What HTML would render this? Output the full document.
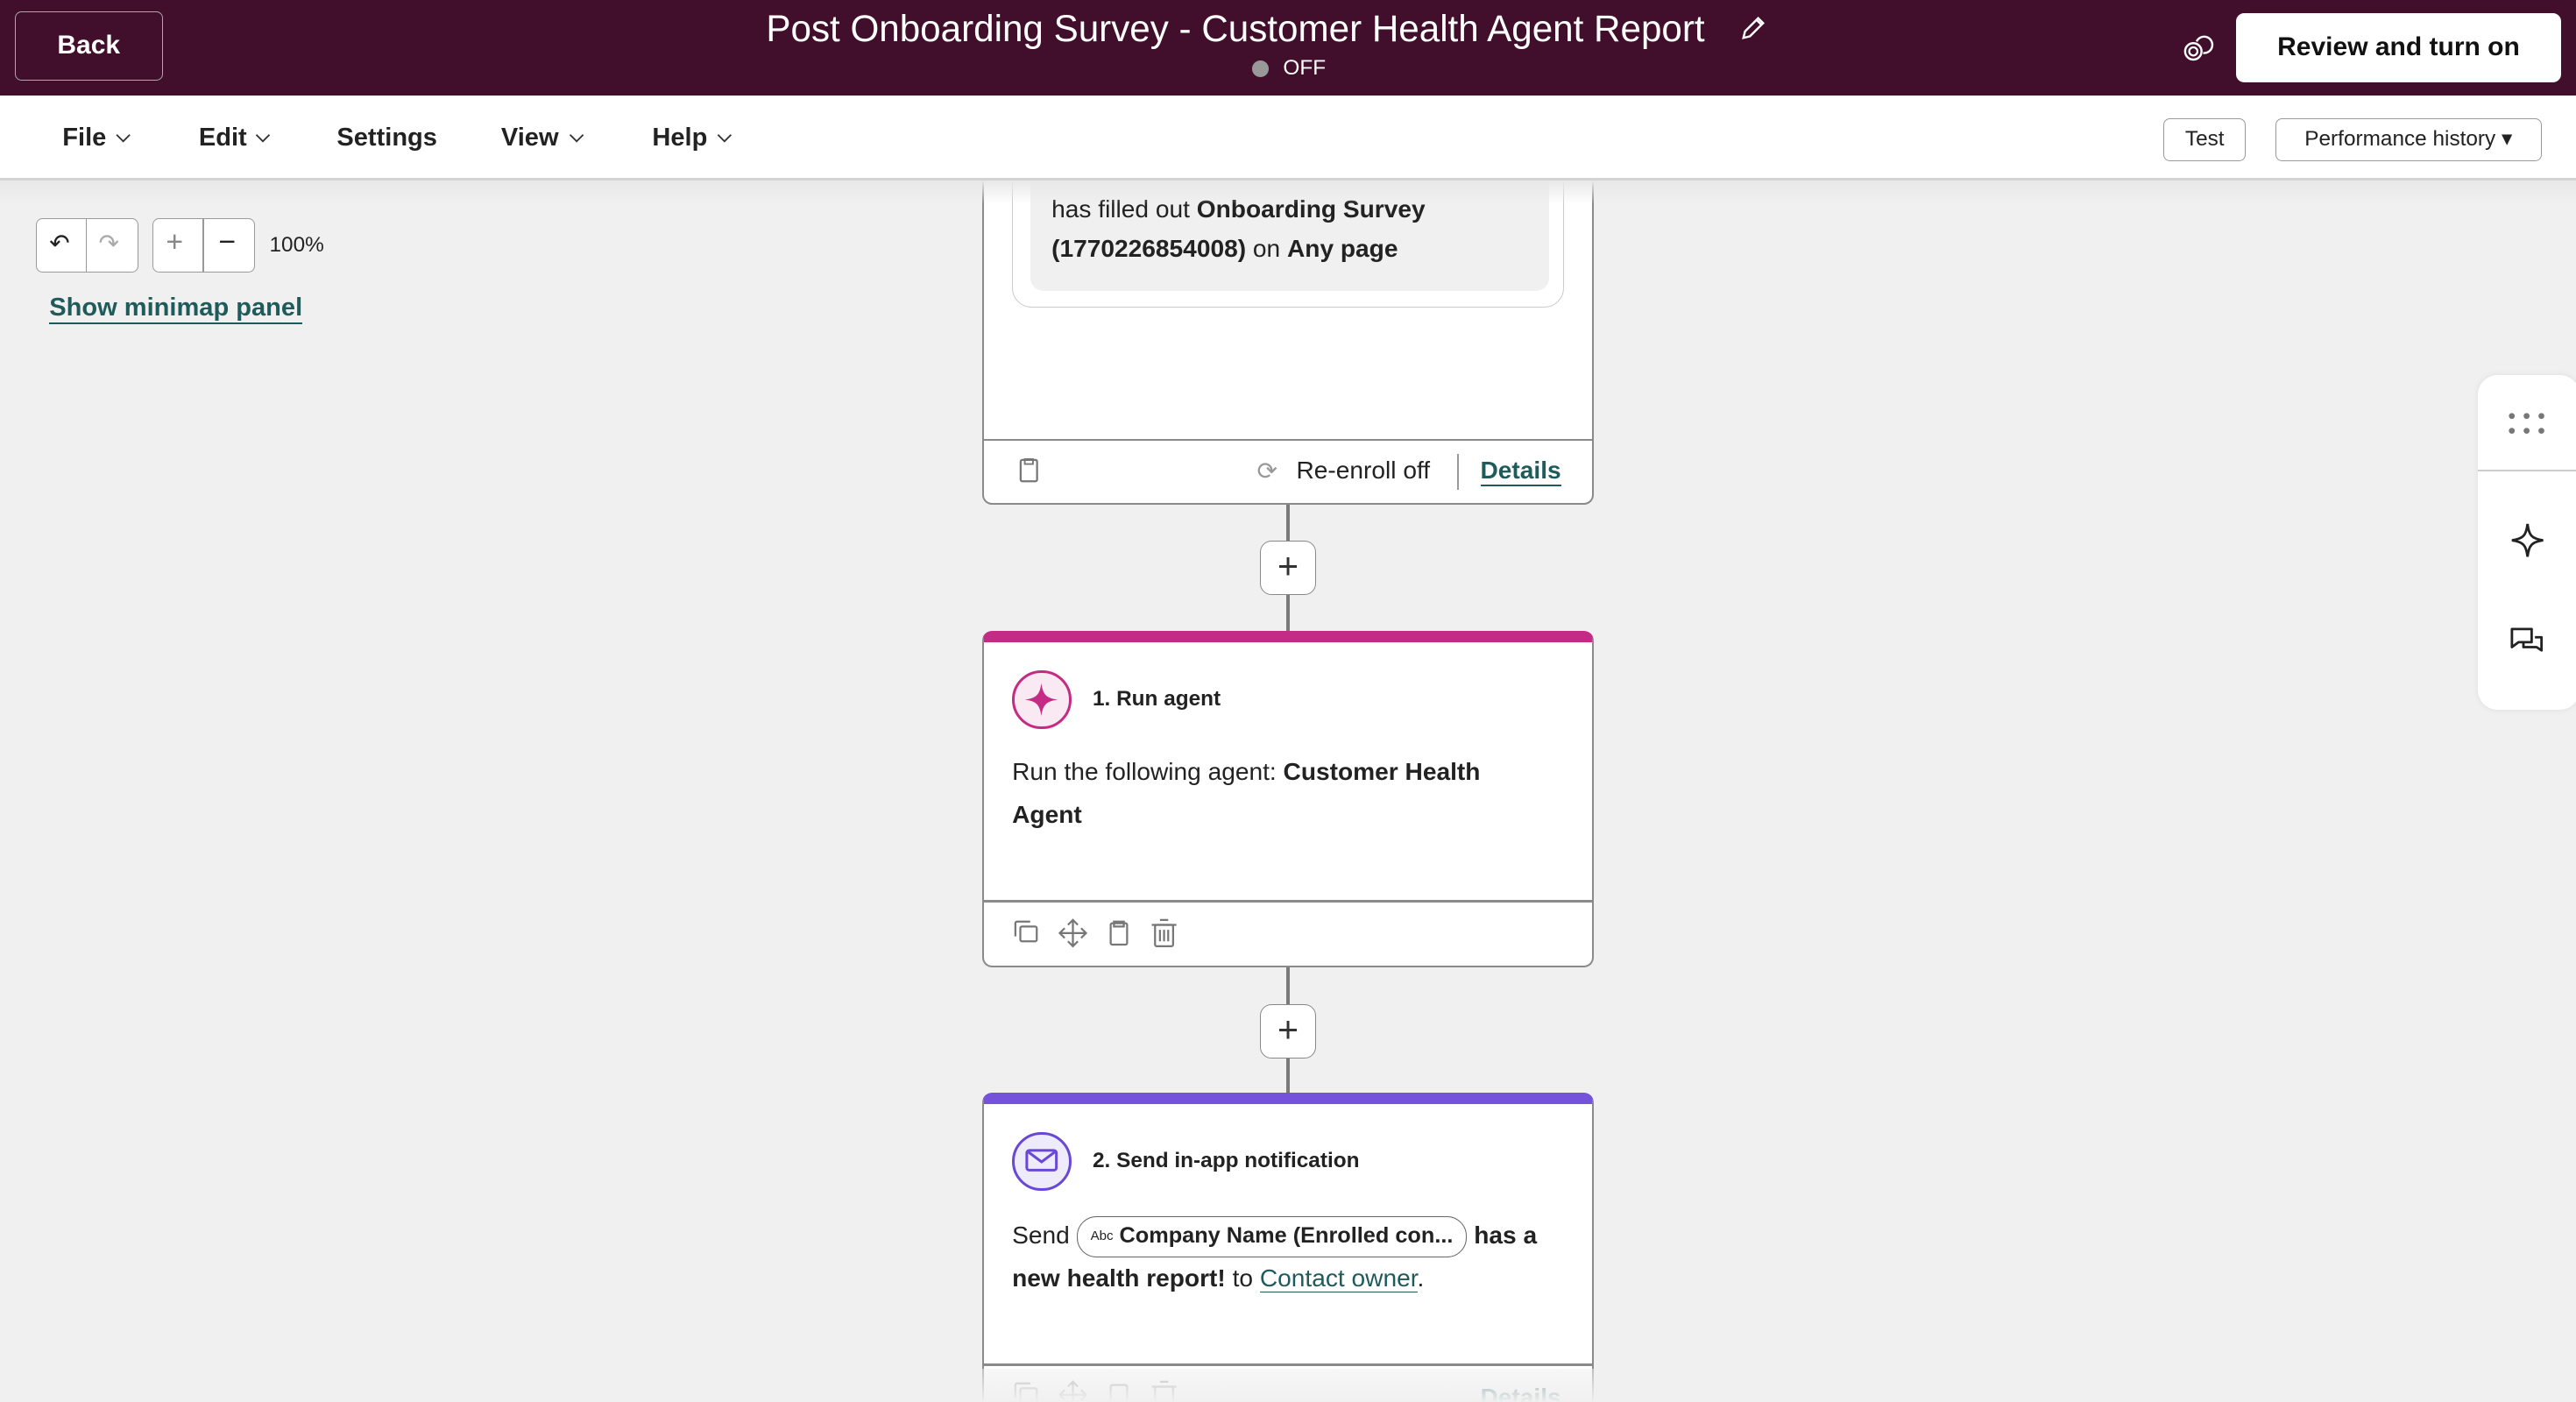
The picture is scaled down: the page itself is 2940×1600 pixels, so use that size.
<!DOCTYPE html>
<html><head><meta charset="utf-8"><style>
*{margin:0;padding:0;box-sizing:border-box}
html,body{width:2940px;height:1600px;overflow:hidden;background:#f0f0f0}
#w{zoom:1.875;width:1568px;height:853.4px;position:relative;font-family:"Liberation Sans",sans-serif;color:#222;overflow:hidden;background:#f0f0f0}
.a{position:absolute}
.hdr{left:0;top:0;width:1568px;height:58px;background:#410e2b;z-index:5}
.btn{border:1px solid #999;border-radius:4px}
.menu{left:0;top:58px;width:1568px;height:52px;background:#fff;border-bottom:2px solid #d3d3d3;z-index:5}
.mi{top:75px;font-size:15.5px;font-weight:bold;color:#222;z-index:6}
.card{left:598px;width:372px;background:#fff;border:1.3px solid #8a8a8a;border-radius:6px;overflow:hidden}
.line{left:783px;width:2px;background:#7a7a7a}
.plus{left:767px;width:34px;height:33px;background:#fff;border:1px solid #888;border-radius:7px;font-size:22px;text-align:center;line-height:30px;color:#333}
.t15{font-size:15px;line-height:26px}
svg{position:absolute;overflow:visible}
.z{z-index:6}
</style></head><body><div id="w">
<!-- top card -->
<div class="a card" style="top:90px;height:217px">
 <div class="a" style="left:17px;top:-10px;width:336px;height:106px;border:1px solid #ccc;border-radius:12px"></div>
 <div class="a" style="left:28px;top:0;width:316px;height:86px;background:#f0f0f0;border-radius:8px"></div>
 <div class="a t15" style="left:41px;top:24px;width:300px;line-height:24px">has filled out <b>Onboarding Survey (1770226854008)</b> on <b>Any page</b></div>
 <div class="a" style="left:0;top:176px;width:372px;height:1.3px;background:#8a8a8a"></div>
 <svg style="left:21px;top:188px" width="12" height="15" viewBox="0 0 12 15"><rect x="1" y="1" width="10" height="13" rx="1" fill="none" stroke="#777" stroke-width="1.2"/><rect x="3.5" y="0.5" width="5" height="3" fill="none" stroke="#777"/></svg>
 <div class="a" style="left:166px;top:187px;font-size:15px;color:#999">&#10227;</div>
 <div class="a" style="left:190px;top:187px;font-size:15px">Re-enroll off</div>
 <div class="a" style="left:288px;top:185px;width:1px;height:22px;background:#999"></div>
 <div class="a" style="left:302px;top:187px;font-size:15px;font-weight:bold;color:#1f5b5b;border-bottom:1.5px solid #1f5b5b;line-height:17px">Details</div>
</div>
<div class="a hdr"></div>
<div class="a btn z" style="left:9px;top:7px;width:90px;height:42px;border-color:#aaa;color:#fff;font-weight:bold;font-size:16px;text-align:center;line-height:40px">Back</div>
<div class="a z" style="left:0;width:1504px;top:5px;text-align:center;color:#fff;font-size:22.5px">Post Onboarding Survey - Customer Health Agent Report</div>
<svg class="z" style="left:1059px;top:9px" width="16" height="16" viewBox="0 0 16 16"><path d="M2 14l1-4 8-8 3 3-8 8z M10 3l3 3" fill="none" stroke="#fff" stroke-width="1.3"/></svg>
<div class="a z" style="left:762px;top:37px;width:10px;height:10px;border-radius:5px;background:#999"></div>
<div class="a z" style="left:781px;top:34px;color:#fff;font-size:13px">OFF</div>
<svg class="z" style="left:1329px;top:20px" width="18" height="17" viewBox="0 0 18 17"><circle cx="6" cy="11" r="5" fill="none" stroke="#fff" stroke-width="1.3"/><circle cx="6" cy="11" r="2.5" fill="none" stroke="#fff" stroke-width="1.2"/><path d="M8 5a5 5 0 1 1 4 7" fill="none" stroke="#fff" stroke-width="1.3"/></svg>
<div class="a z" style="left:1361px;top:8px;width:198px;height:42px;background:#fff;border-radius:5px;font-weight:bold;font-size:16px;text-align:center;line-height:42px;color:#111">Review and turn on</div>
<div class="a menu"></div>
<div class="a mi" style="left:38px">File</div>
<div class="a mi" style="left:121px">Edit</div>
<div class="a mi" style="left:205px">Settings</div>
<div class="a mi" style="left:305px">View</div>
<div class="a mi" style="left:397px">Help</div>
<svg class="z" style="left:0;top:0" width="1" height="1"><g fill="none" stroke="#333" stroke-width="1"><path d="M71 82l4 4 4-4M156 82l4 4 4-4M347 82l4 4 4-4M437 82l4 4 4-4"/></g></svg>
<div class="a btn z" style="left:1317px;top:72px;width:50px;height:26px;font-size:13px;text-align:center;line-height:24px">Test</div>
<div class="a btn z" style="left:1385px;top:72px;width:162px;height:26px;font-size:13px;text-align:center;line-height:24px">Performance history &#9662;</div>
<!-- zoom controls -->
<div class="a btn" style="left:22px;top:133px;width:62px;height:33px;background:#fff"></div>
<div class="a" style="left:52px;top:133px;width:1px;height:33px;background:#999"></div>
<div class="a" style="left:30px;top:139px;font-size:15px">&#8630;</div>
<div class="a" style="left:60px;top:139px;font-size:15px;color:#aaa">&#8631;</div>
<div class="a btn" style="left:93px;top:133px;width:62px;height:33px;background:#fff"></div>
<div class="a" style="left:123px;top:133px;width:1px;height:33px;background:#999"></div>
<div class="a" style="left:101px;top:137px;font-size:18px;color:#888">+</div>
<div class="a" style="left:133px;top:137px;font-size:18px">&minus;</div>
<div class="a" style="left:164px;top:142px;font-size:13px">100%</div>
<div class="a" style="left:30px;top:179px;font-size:15.5px;font-weight:bold;color:#1f5b5b;border-bottom:1.5px solid #1f5b5b;line-height:17px">Show minimap panel</div>
<div class="a" style="left:0;top:110px;width:1568px;height:14px;background:linear-gradient(#e8e8e8,rgba(240,240,240,0));z-index:4"></div>
<div class="a line" style="top:307px;height:78px"></div>
<div class="a plus" style="top:329px">+</div>
<!-- card1 -->
<div class="a card" style="top:384px;height:205px;border-top:7px solid #c42b85">
 <div class="a" style="left:17px;top:17px;width:36px;height:36px;border-radius:18px;border:2px solid #c42b85;background:#f8e9f2"></div>
 <svg style="left:23px;top:23px" width="24" height="24" viewBox="0 0 24 24"><path d="M12 2C13 9 15 11 22 12C15 13 13 15 12 22C11 15 9 13 2 12C9 11 11 9 12 2Z" fill="#c42b85"/></svg>
 <div class="a" style="left:66px;top:27px;font-size:13px;font-weight:bold">1. Run agent</div>
 <div class="a t15" style="left:17px;top:66px;width:310px">Run the following agent: <b>Customer Health Agent</b></div>
 <div class="a" style="left:0;top:157px;width:372px;height:1.3px;background:#8a8a8a"></div>
 <svg style="left:18px;top:168px" width="110" height="18" viewBox="0 0 110 18"><g fill="none" stroke="#777" stroke-width="1.2"><rect x="4" y="5" width="10" height="9" rx="1"/><path d="M1 11V3a1 1 0 0 1 1-1h8"/><path d="M36 1v16M28 9h16M33 4l3-3 3 3M33 14l3 3 3-3M31 6l-3 3 3 3M41 6l3 3-3 3"/><rect x="59" y="3" width="10" height="13" rx="1"/><rect x="61" y="2" width="6" height="3"/><rect x="86" y="4" width="11" height="13" rx="1"/><path d="M84 4h15M89 1h5M89 7v7M91.5 7v7M94 7v7"/></g></svg>
</div>
<div class="a line" style="top:589px;height:77px"></div>
<div class="a plus" style="top:611px">+</div>
<!-- card2 -->
<div class="a card" style="top:665px;height:220px;border-top:7px solid #7452d9">
 <div class="a" style="left:17px;top:17px;width:36px;height:36px;border-radius:18px;border:2px solid #6a48d6;background:#eeebfb"></div>
 <svg style="left:25px;top:27px" width="20" height="14" viewBox="0 0 20 14"><rect x="1" y="1" width="18" height="12" rx="1.5" fill="none" stroke="#6a48d6" stroke-width="1.6"/><path d="M2 2l8 6 8-6" fill="none" stroke="#6a48d6" stroke-width="1.6"/></svg>
 <div class="a" style="left:66px;top:27px;font-size:13px;font-weight:bold">2. Send in-app notification</div>
 <div class="a t15" style="left:17px;top:67px;width:345px">Send <span style="display:inline-block;border:1px solid #666;border-radius:12px;padding:0 8px;height:25px;line-height:23px;font-size:13.5px;font-weight:bold;vertical-align:middle"><span style="font-size:8px;font-weight:normal;vertical-align:top">Abc</span> Company Name (Enrolled con...</span> <b>has a new health report!</b> to <span style="color:#1f5b5b;border-bottom:1px solid #1f5b5b">Contact owner</span>.</div>
 <div class="a" style="left:0;top:158px;width:372px;height:1.3px;background:#8a8a8a"></div>
 <svg style="left:18px;top:168px" width="110" height="18" viewBox="0 0 110 18"><g fill="none" stroke="#999" stroke-width="1.2"><rect x="4" y="5" width="10" height="9" rx="1"/><path d="M1 11V3a1 1 0 0 1 1-1h8"/><path d="M36 1v16M28 9h16M33 4l3-3 3 3M31 6l-3 3 3 3M41 6l3 3-3 3"/><rect x="59" y="3" width="10" height="13" rx="1"/><rect x="86" y="4" width="11" height="13" rx="1"/><path d="M84 4h15M89 1h5"/></g></svg>
 <div class="a" style="left:302px;top:170px;font-size:15px;font-weight:bold;color:#1f5b5b">Details</div>
</div>
<div class="a" style="left:0;top:833px;width:1568px;height:21px;background:linear-gradient(rgba(240,240,240,0.5),#f0f0f0)"></div>
<!-- right panel -->
<div class="a" style="left:1508px;top:228px;width:62px;height:204px;background:#fff;border-radius:12px;box-shadow:0 0 4px rgba(0,0,0,.08)"></div>
<div class="a" style="left:1508px;top:286px;width:60px;height:1px;background:#ccc"></div>
<svg style="left:1527px;top:251px" width="22" height="13" viewBox="0 0 22 13"><g fill="#777"><circle cx="2" cy="2" r="1.8"/><circle cx="11" cy="2" r="1.8"/><circle cx="20" cy="2" r="1.8"/><circle cx="2" cy="11" r="1.8"/><circle cx="11" cy="11" r="1.8"/><circle cx="20" cy="11" r="1.8"/></g></svg>
<svg style="left:1528px;top:318px" width="21" height="22" viewBox="0 0 21 22"><path d="M10.5 1C11.3 8 13 10 20 11C13 12 11.3 14 10.5 21C9.7 14 8 12 1 11C8 10 9.7 8 10.5 1Z" fill="none" stroke="#222" stroke-width="1.5"/></svg>
<svg style="left:1528px;top:382px" width="20" height="17" viewBox="0 0 20 17"><path d="M1 1h12v8H5l-4 3z M15 6h4v8l-3-2H8v-3" fill="none" stroke="#222" stroke-width="1.5" stroke-linejoin="round"/></svg>
</div></body></html>
